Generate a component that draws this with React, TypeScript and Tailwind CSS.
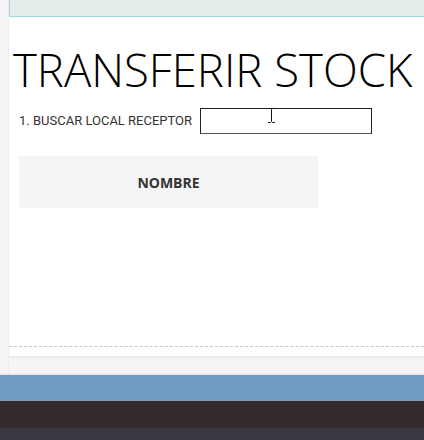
import React from "react";

export default function App() {
  return (
    <div className="w-[424px] h-[440px] overflow-hidden flex flex-col bg-[#f5f5f5]" style={{ fontFamily: '"Open Sans", sans-serif' }}>
      <div className="flex flex-1 min-h-0">
        <div className="w-[8px] shrink-0 bg-[#f5f5f5] border-r border-[#ececec] box-content" />
        <div className="flex-1 flex flex-col">
          <div className="h-[17px] shrink-0 bg-[#e6eeec] border-l border-b border-[#a9d4ea]" />
          <div className="flex-1 flex flex-col bg-white border-b-2 border-[#ececec]">
            <div className="flex-1 flex flex-col pl-[4px]">
              <h1 className="mt-[25px] text-[45.5px] leading-[55px] text-black font-[320] whitespace-nowrap">TRANSFERIR STOCK</h1>
              <div className="mt-[11px] flex items-center pl-[6px]">
                <span className="text-[13px] text-[#333]" style={{ fontFamily: 'Roboto, sans-serif' }}>1. BUSCAR LOCAL RECEPTOR</span>
                <div className="relative ml-[8px] w-[172px] h-[26px] border border-[#222] border-b-[#555]">
                  <svg className="absolute left-[66px] top-[-1px]" width="9" height="15" viewBox="0 0 9 15">
                    <path d="M1 0.5H3.5L4.5 1.5L5.5 0.5H8M4.5 1.5V13.5M1 14.5H3.5L4.5 13.5L5.5 14.5H8" stroke="#111" strokeWidth="1" fill="none" />
                  </svg>
                </div>
              </div>
              <div className="mt-[22px] ml-[6px] w-[299px] h-[52px] bg-[#f5f5f5] flex items-center justify-center">
                <span className="text-[14px] font-bold text-[#333]">NOMBRE</span>
              </div>
              <div className="flex-1" />
            </div>
            <div className="h-[10px] border-t border-dashed border-[#c8c8c8]" />
          </div>
          <div className="h-[16px]" />
        </div>
      </div>
      <div className="h-[1px] bg-[#e2e2e2]" />
      <div className="h-[26px] bg-[#729cc6] border-b border-[#8a99b8]" />
      <div className="h-[27px] bg-[#342a2b]" />
      <div className="h-[12px] bg-[#383842]" />
    </div>
  );
}
